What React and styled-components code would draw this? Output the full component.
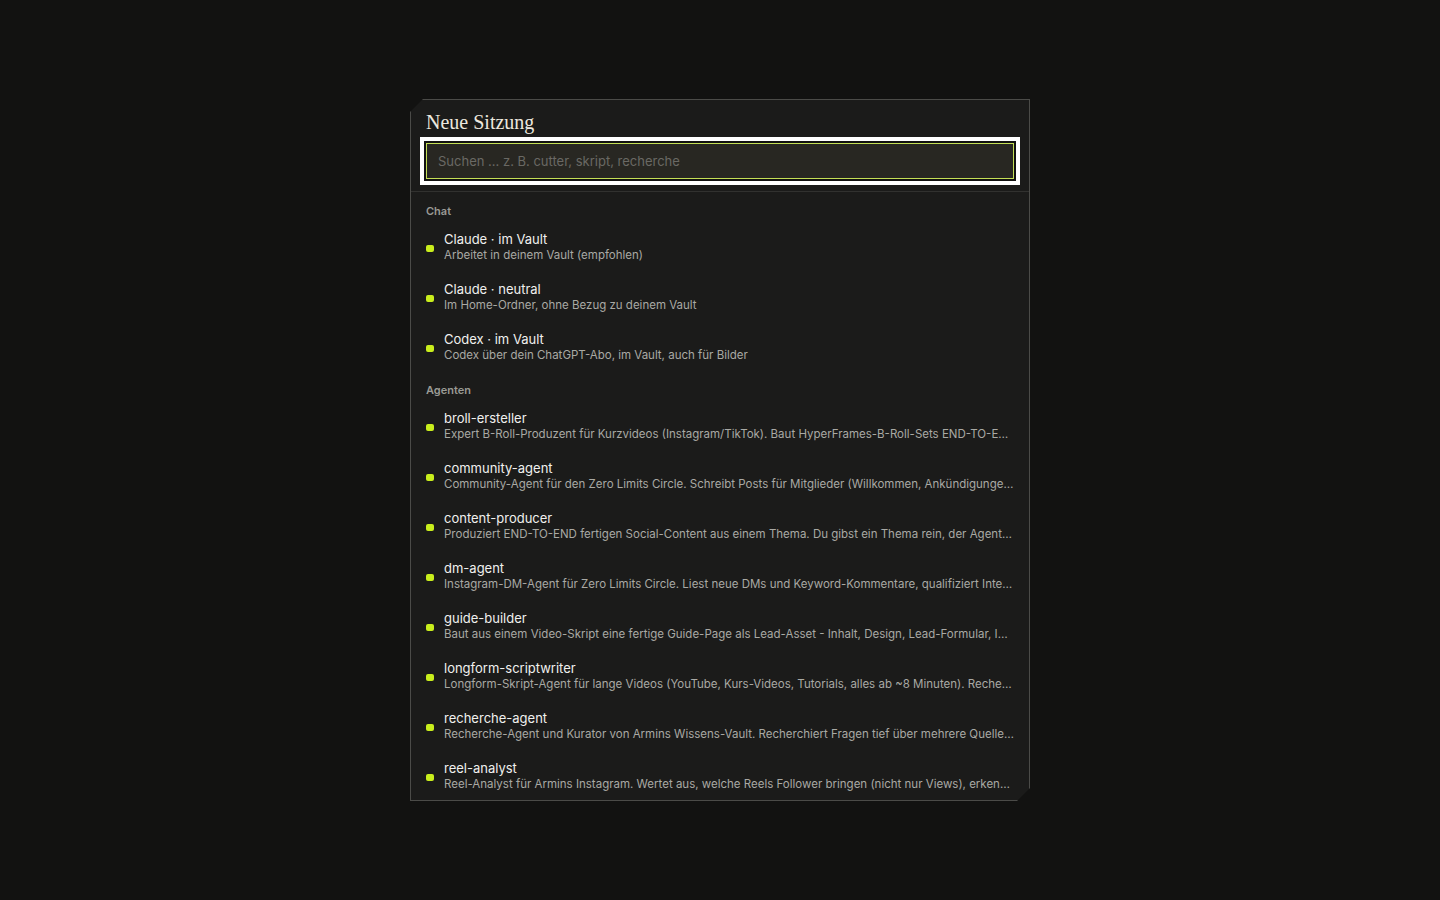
import styled, { createGlobalStyle } from 'styled-components';

const GlobalStyle = createGlobalStyle`
  html, body {
    margin: 0;
    height: 100%;
    background: #121211;
  }
  #root {
    height: 100%;
  }
  * {
    box-sizing: border-box;
  }
`;

const Screen = styled.div`
  height: 100vh;
  display: flex;
  align-items: center;
  justify-content: center;
  font-family: Inter, 'Noto Sans', sans-serif;
`;

const Panel = styled.div`
  width: 620px;
  height: 702px;
  display: flex;
  flex-direction: column;
  background: #1b1b1a;
  border: 1px solid #4b4b48;
  clip-path: polygon(
    13px 0,
    100% 0,
    100% calc(100% - 13px),
    calc(100% - 13px) 100%,
    0 100%,
    0 13px
  );
  overflow: hidden;
`;

const Header = styled.div`
  display: flex;
  flex-direction: column;
  gap: 9px;
  padding: 10px 15px 12px;
  border-bottom: 1px solid #31312f;
`;

const Title = styled.h2`
  margin: 0;
  font-family: 'Liberation Serif', 'DejaVu Serif', serif;
  font-weight: 400;
  font-size: 20px;
  line-height: 24px;
  color: #ece8df;
`;

const SearchInput = styled.input`
  height: 36px;
  width: 100%;
  padding: 0 11px;
  background: #282722;
  border: 1px solid #c4df55;
  border-radius: 0;
  box-shadow: 0 0 0 2px #121211, 0 0 0 6px #ffffff;
  outline: none;
  font-family: Inter, sans-serif;
  font-size: 13px;
  color: #e8e8e4;
  caret-color: #e8e8e4;

  &::placeholder {
    color: #6a6964;
  }
`;

const List = styled.div`
  flex: 1;
  overflow: hidden;
  padding-top: 1px;
`;

const SectionLabel = styled.div`
  padding: 11px 15px 4px;
  font-size: 11px;
  line-height: 14px;
  font-weight: 600;
  color: #9a9a95;
`;

const Item = styled.div`
  height: 50px;
  display: flex;
  align-items: center;
  gap: 10px;
  padding: 0 15px 1px;
  cursor: pointer;

  &:hover {
    background: #222220;
  }
`;

const Dot = styled.span`
  flex: none;
  width: 8px;
  height: 7px;
  border-radius: 2px;
  background: ${({ color }) => color || '#c9ee1c'};
  margin-top: 3px;
`;

const ItemText = styled.div`
  min-width: 0;
  flex: 1;
  display: flex;
  flex-direction: column;
  gap: 1px;
`;

const ItemName = styled.div`
  font-size: 13px;
  line-height: 16px;
  color: #f0f0ee;
  white-space: nowrap;
`;

const ItemDesc = styled.div`
  font-size: 11.5px;
  line-height: 14px;
  color: #a9a9a4;
  white-space: nowrap;
  overflow: hidden;
  text-overflow: ellipsis;
`;

const sections = [
  {
    label: 'Chat',
    items: [
      { name: 'Claude · im Vault', desc: 'Arbeitet in deinem Vault (empfohlen)' },
      { name: 'Claude · neutral', desc: 'Im Home-Ordner, ohne Bezug zu deinem Vault' },
      { name: 'Codex · im Vault', desc: 'Codex über dein ChatGPT-Abo, im Vault, auch für Bilder' },
    ],
  },
  {
    label: 'Agenten',
    items: [
      {
        name: 'broll-ersteller',
        desc: 'Expert B-Roll-Produzent für Kurzvideos (Instagram/TikTok). Baut HyperFrames-B-Roll-Sets END-TO-END aus einem fertigen Skript.',
      },
      {
        name: 'community-agent',
        desc: 'Community-Agent für den Zero Limits Circle. Schreibt Posts für Mitglieder (Willkommen, Ankündigungen, Challenges).',
      },
      {
        name: 'content-producer',
        desc: 'Produziert END-TO-END fertigen Social-Content aus einem Thema. Du gibst ein Thema rein, der Agent liefert Skript, Caption und Assets.',
      },
      {
        name: 'dm-agent',
        desc: 'Instagram-DM-Agent für Zero Limits Circle. Liest neue DMs und Keyword-Kommentare, qualifiziert Interessenten und antwortet.',
      },
      {
        name: 'guide-builder',
        desc: 'Baut aus einem Video-Skript eine fertige Guide-Page als Lead-Asset - Inhalt, Design, Lead-Formular, Integration.',
      },
      {
        name: 'longform-scriptwriter',
        desc: 'Longform-Skript-Agent für lange Videos (YouTube, Kurs-Videos, Tutorials, alles ab ~8 Minuten). Recherchiert und strukturiert.',
      },
      {
        name: 'recherche-agent',
        desc: 'Recherche-Agent und Kurator von Armins Wissens-Vault. Recherchiert Fragen tief über mehrere Quellen und legt Notizen an.',
      },
      {
        name: 'reel-analyst',
        desc: 'Reel-Analyst für Armins Instagram. Wertet aus, welche Reels Follower bringen (nicht nur Views), erkennt Muster und Hooks.',
      },
    ],
  },
];

export default function App() {
  return (
    <>
      <GlobalStyle />
      <Screen>
        <Panel>
          <Header>
            <Title>Neue Sitzung</Title>
            <SearchInput
              autoFocus
              type='text'
              placeholder='Suchen ... z. B. cutter, skript, recherche'
            />
          </Header>
          <List>
            {sections.map((section) => (
              <div key={section.label}>
                <SectionLabel>{section.label}</SectionLabel>
                {section.items.map((item) => (
                  <Item key={item.name}>
                    <Dot />
                    <ItemText>
                      <ItemName>{item.name}</ItemName>
                      <ItemDesc>{item.desc}</ItemDesc>
                    </ItemText>
                  </Item>
                ))}
              </div>
            ))}
          </List>
        </Panel>
      </Screen>
    </>
  );
}
